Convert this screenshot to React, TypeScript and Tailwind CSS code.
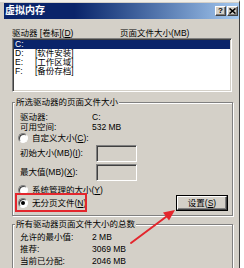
import type { ReactNode } from 'react'

// Win2000-style "虚拟内存" dialog, with the red annotation box and arrow on top.

const sunken =
  'border border-t-[#808080] border-l-[#808080] border-r-white border-b-white shadow-[inset_1px_1px_0_#404040,inset_-1px_-1px_0_#d4d0c8]'
const raised =
  'border border-t-white border-l-white border-r-[#404040] border-b-[#404040] shadow-[inset_-1px_-1px_0_#808080]'
const etched = 'border border-[#808080] shadow-[inset_1px_1px_0_#fff,1px_1px_0_#fff]'

function Radio({ checked = false }: { checked?: boolean }) {
  return (
    <span className="flex h-[10px] w-[10px] shrink-0 items-center justify-center rounded-full border border-t-[#808080] border-l-[#808080] border-r-white border-b-white bg-white shadow-[inset_1px_1px_0_#404040]">
      {checked && <span className="h-[4px] w-[4px] rounded-full bg-black" />}
    </span>
  )
}

function Group({ legend, className, children }: { legend: string; className: string; children: ReactNode }) {
  return (
    <div className={`relative w-[221px] ${etched} ${className}`}>
      <span className="absolute -top-[6px] left-[2px] bg-[#d4d0c8] px-[1px] leading-[10px]">{legend}</span>
      {children}
    </div>
  )
}

function InfoRow({ label, value, width = 'w-[72px]' }: { label: ReactNode; value?: string; width?: string }) {
  return (
    <div className="flex h-[10px] items-center leading-[10px]">
      <span className={width}>{label}</span>
      {value && <span>{value}</span>}
    </div>
  )
}

const drives = [
  { letter: 'C:', label: '', selected: true },
  { letter: 'D:', label: '[软件安装]' },
  { letter: 'E:', label: '[工作区域]' },
  { letter: 'F:', label: '[备份存档]' },
]

export default function App() {
  return (
    <div className="relative h-[268px] w-[244px] overflow-hidden bg-white font-['Liberation_Sans','Noto_Sans_CJK_SC',sans-serif] text-[8.5px] text-black">
      <div className="flex h-[268px] w-[240px] flex-col border-t-2 border-r border-t-[#f1efe9] border-r-[#404040] bg-[#d4d0c8] pl-[4px] pt-[1px]">
        {/* title bar */}
        <div className="flex h-[16px] w-[235px] shrink-0 items-center bg-linear-to-r from-[#0a246a] from-30% to-[#a6caf0] pl-[1px] pr-[1px]">
          <span className="text-[10px] font-bold leading-none text-white">虚拟内存</span>
          <div className="ml-auto flex gap-[1px]">
            <span className={`flex h-[10px] w-[11px] items-center justify-center bg-[#d4d0c8] text-[8px] font-bold leading-none ${raised}`}>
              ?
            </span>
            <span className={`flex h-[10px] w-[11px] items-center justify-center bg-[#d4d0c8] ${raised}`}>
              <svg width="7" height="6" viewBox="0 0 7 6">
                <path d="M0.5 0.5 L6.5 5.5 M6.5 0.5 L0.5 5.5" stroke="#000" strokeWidth="1.6" />
              </svg>
            </span>
          </div>
        </div>

        <div className="flex flex-col pl-[8px]">
          {/* list header */}
          <div className="mt-[9px] flex h-[10px] leading-[10px]">
            <span className="w-[108px]">
              驱动器 [卷标](<u>D</u>)
            </span>
            <span>页面文件大小(MB)</span>
          </div>

          {/* drive list */}
          <div className={`h-[54px] w-[220px] bg-white p-[1px] ${sunken}`}>
            {drives.map((d) => (
              <div
                key={d.letter}
                className={`flex h-[9px] items-center pl-[1px] leading-[9px] ${d.selected ? 'bg-[#0a246a] text-white' : ''}`}
              >
                <span className="w-[20px]">{d.letter}</span>
                <span>{d.label}</span>
              </div>
            ))}
          </div>

          {/* selected drive */}
          <Group legend="所选驱动器的页面文件大小" className="mt-[10px] h-[114px]">
            <div className="flex flex-col pl-[7px] pt-[9px]">
              <InfoRow label="驱动器:" value="C:" />
              <InfoRow label="可用空间:" value="532 MB" />
              <div className="-ml-[2px] mt-[1px] flex h-[10px] items-center gap-[4px] leading-[10px]">
                <Radio />
                <span>
                  自定义大小(<u>C</u>):
                </span>
              </div>
              <div className="mt-[2px] flex h-[17px] items-center">
                <span className="w-[76px]">
                  初始大小(MB)(<u>I</u>):
                </span>
                <span className={`h-[17px] w-[41px] bg-[#d4d0c8] ${sunken}`} />
              </div>
              <div className="mt-[2px] flex h-[17px] items-center">
                <span className="w-[76px]">
                  最大值(MB)(<u>X</u>):
                </span>
                <span className={`h-[17px] w-[41px] bg-[#d4d0c8] ${sunken}`} />
              </div>
              <div className="-ml-[2px] mt-[4px] flex h-[10px] items-center gap-[4px] leading-[10px]">
                <Radio />
                <span>
                  系统管理的大小(<u>Y</u>)
                </span>
              </div>
              <div className="flex h-[16px] items-center justify-between pr-[4px]">
                <div className="-ml-[2px] flex items-center gap-[4px] leading-[10px]">
                  <Radio checked />
                  <span>
                    无分页文件(<u>N</u>)
                  </span>
                </div>
                <div className="h-[16px] w-[52px] border border-black">
                  <div className={`flex h-full w-full items-center justify-center bg-[#d4d0c8] leading-none ${raised}`}>
                    设置(<u>S</u>)
                  </div>
                </div>
              </div>
            </div>
            <div className="absolute left-[2px] top-[90px] h-[19px] w-[72px] border-2 border-[#e3262d]" />
          </Group>

          {/* totals */}
          <Group legend="所有驱动器页面文件大小的总数" className="mt-[8px] h-[60px]">
            <div className="flex flex-col gap-[2px] pl-[7px] pt-[7px]">
              <InfoRow label="允许的最小值:" value="2 MB" />
              <InfoRow label="推荐:" value="3069 MB" />
              <InfoRow label="当前已分配:" value="2046 MB" />
            </div>
          </Group>
        </div>
      </div>

      {/* annotation arrow */}
      <svg className="pointer-events-none absolute inset-0" width="244" height="268" viewBox="0 0 244 268">
        <path d="M131 243 L166.5 216.5" stroke="#e3262d" strokeWidth="2" strokeLinecap="round" />
        <polygon points="175,210 169,220.5 163,212.5" fill="#e3262d" />
      </svg>
    </div>
  )
}
